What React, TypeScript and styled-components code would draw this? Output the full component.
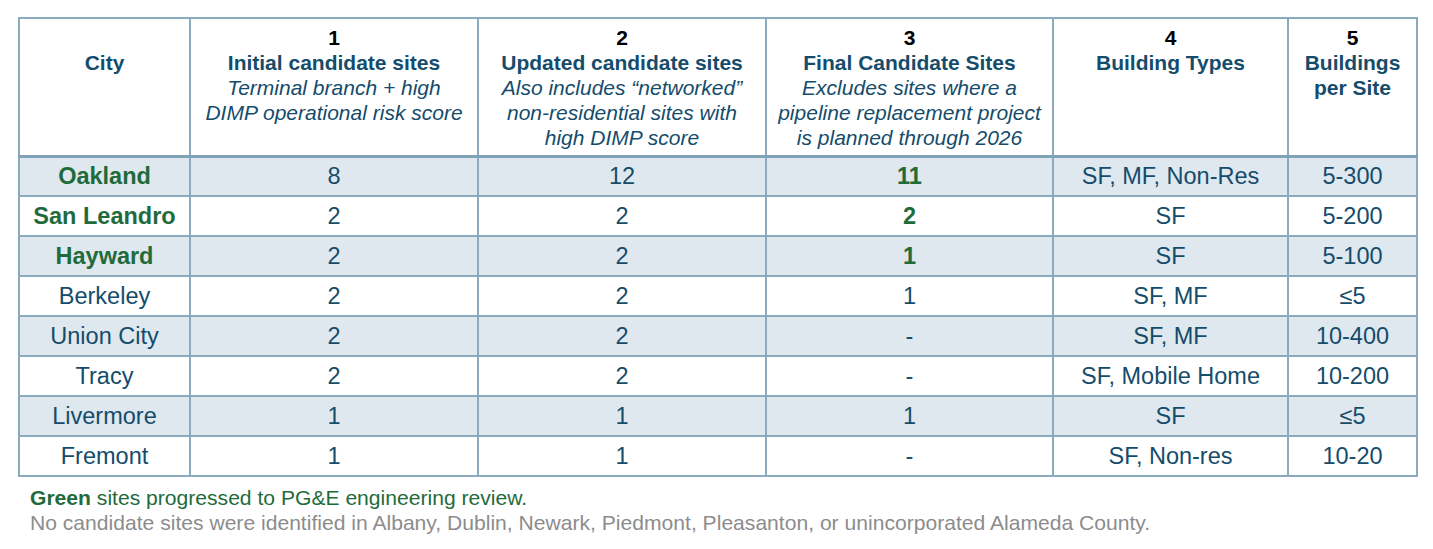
import styled, { createGlobalStyle } from "styled-components";

const GlobalStyle = createGlobalStyle`
  html, body {
    margin: 0;
    padding: 0;
    background: #ffffff;
    font-family: "Liberation Sans", Arial, sans-serif;
  }
`;

type Row = {
  city: string;
  initial: string;
  updated: string;
  final: string;
  types: string;
  perSite: string;
  green?: boolean;
};

const rows: Row[] = [
  { city: "Oakland", initial: "8", updated: "12", final: "11", types: "SF, MF, Non-Res", perSite: "5-300", green: true },
  { city: "San Leandro", initial: "2", updated: "2", final: "2", types: "SF", perSite: "5-200", green: true },
  { city: "Hayward", initial: "2", updated: "2", final: "1", types: "SF", perSite: "5-100", green: true },
  { city: "Berkeley", initial: "2", updated: "2", final: "1", types: "SF, MF", perSite: "≤5" },
  { city: "Union City", initial: "2", updated: "2", final: "-", types: "SF, MF", perSite: "10-400" },
  { city: "Tracy", initial: "2", updated: "2", final: "-", types: "SF, Mobile Home", perSite: "10-200" },
  { city: "Livermore", initial: "1", updated: "1", final: "1", types: "SF", perSite: "≤5" },
  { city: "Fremont", initial: "1", updated: "1", final: "-", types: "SF, Non-res", perSite: "10-20" },
];

const columns = [
  { num: "", title: "City", note: [] as string[] },
  { num: "1", title: "Initial candidate sites", note: ["Terminal branch + high", "DIMP operational risk score"] },
  { num: "2", title: "Updated candidate sites", note: ["Also includes “networked”", "non-residential sites with", "high DIMP score"] },
  { num: "3", title: "Final Candidate Sites", note: ["Excludes sites where a", "pipeline replacement project", "is planned through 2026"] },
  { num: "4", title: "Building Types", note: [] },
  { num: "5", title: "Buildings per Site", note: [] },
];

const widths = [171, 288, 288, 287, 235, 129];

export default function App() {
  return (
    <Page>
      <GlobalStyle />
      <Table>
        <colgroup>
          {widths.map((w, i) => (
            <col key={i} style={{ width: w }} />
          ))}
        </colgroup>
        <thead>
          <tr>
            {columns.map((c, i) => (
              <HeadCell key={i} $narrow={i === 5}>
                <Num>{c.num || "\u00a0"}</Num>
                <Title>{c.title}</Title>
                {c.note.map((n) => (
                  <Note key={n}>{n}</Note>
                ))}
              </HeadCell>
            ))}
          </tr>
        </thead>
        <tbody>
          {rows.map((r, i) => (
            <BodyRow key={r.city} $shaded={i % 2 === 0}>
              <Cell $green={r.green}>{r.city}</Cell>
              <Cell>{r.initial}</Cell>
              <Cell>{r.updated}</Cell>
              <Cell $green={r.green}>{r.final}</Cell>
              <Cell>{r.types}</Cell>
              <Cell>{r.perSite}</Cell>
            </BodyRow>
          ))}
        </tbody>
      </Table>
      <Footer>
        <FootLine>
          <GreenWord>Green</GreenWord> sites progressed to PG&amp;E engineering review.
        </FootLine>
        <FootNote>
          No candidate sites were identified in Albany, Dublin, Newark, Piedmont, Pleasanton, or unincorporated Alameda County.
        </FootNote>
      </Footer>
    </Page>
  );
}

const Page = styled.div`
  padding: 17px 0 0 18px;
  width: 1433px;
  height: 549px;
  box-sizing: border-box;
  overflow: hidden;
`;

const Table = styled.table`
  border-collapse: collapse;
  table-layout: fixed;
  width: 1398px;
  border: 2px solid #8aaabd;
  color: #154c6b;
`;

const HeadCell = styled.th<{ $narrow?: boolean }>`
  vertical-align: top;
  text-align: center;
  height: 138px;
  padding: 6px ${(p) => (p.$narrow ? "10px" : "4px")} 0;
  border: 2px solid #8aaabd;
  border-bottom: 3px solid #7ea3b8;
  box-sizing: border-box;
`;

const Num = styled.div`
  font-size: 21px;
  line-height: 25px;
  font-weight: bold;
  color: #000000;
`;

const Title = styled.div`
  font-size: 21px;
  line-height: 25px;
  font-weight: bold;
  color: #154c6b;
`;

const Note = styled.div`
  font-size: 21px;
  line-height: 25px;
  font-weight: normal;
  font-style: italic;
  color: #154c6b;
  white-space: nowrap;
`;

const BodyRow = styled.tr<{ $shaded?: boolean }>`
  background: ${(p) => (p.$shaded ? "#dfe8ef" : "#ffffff")};
`;

const Cell = styled.td<{ $green?: boolean }>`
  height: 40px;
  padding: 0;
  box-sizing: border-box;
  text-align: center;
  vertical-align: middle;
  border: 2px solid #8aaabd;
  font-size: 23.5px;
  line-height: 26px;
  font-weight: ${(p) => (p.$green ? "bold" : "normal")};
  color: ${(p) => (p.$green ? "#1f6b3b" : "#154c6b")};
`;

const Footer = styled.div`
  padding: 8px 0 0 12px;
  font-size: 21.1px;
  line-height: 25px;
`;

const FootLine = styled.div`
  color: #1f6b3b;
`;

const GreenWord = styled.span`
  font-weight: bold;
`;

const FootNote = styled.div`
  color: #8c8c8c;
`;
